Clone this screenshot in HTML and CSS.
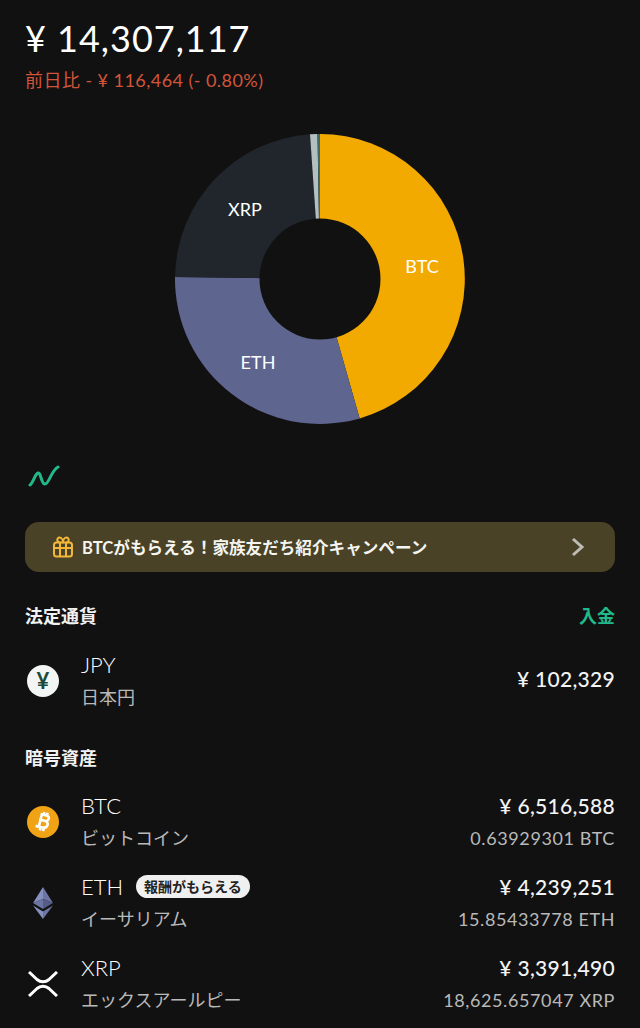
FILE: index.html
```html
<!DOCTYPE html>
<html lang="ja">
<head>
  <meta charset="UTF-8" />
  <meta name="viewport" content="width=device-width, initial-scale=1.0" />
  <title>資産</title>
  <link rel="stylesheet" href="styles.css">
</head>
<body>
  <div class="container">
    <div class="total">¥ 14,307,117</div>
    <div class="change">前日比 - ¥ 116,464 (- 0.80%)</div>

    <div class="chart">
      <svg width="290" height="290" viewBox="0 0 290 290">
        <path d="M145 145 L145 0 A145 145 0 0 1 184.7 284.4 Z" fill="#f3aa00" />
        <path d="M145 145 L184.7 284.4 A145 145 0 0 1 0 143 Z" fill="#5e6690" />
        <path d="M145 145 L0 143 A145 145 0 0 1 135 0.3 Z" fill="#21262d" />
        <path d="M145 145 L135 0.3 A145 145 0 0 1 142.5 0 Z" fill="#b4c0c0" />
        <path d="M145 145 L142.5 0 A145 145 0 0 1 145 0 Z" fill="#3f6a6c" />
        <circle cx="145" cy="145" r="60.5" fill="#111111" />
        <text x="247" y="139" class="chart-label">BTC</text>
        <text x="83" y="235" class="chart-label">ETH</text>
        <text x="70" y="82" class="chart-label">XRP</text>
      </svg>
    </div>

    <svg class="trend" width="32" height="24" viewBox="0 0 32 24">
      <path d="M2 21 C5 19 7 10 10 9 C13 8 13 20 17 20 C21 20 23 7 30 3" fill="none" stroke="#21b98a" stroke-width="3" stroke-linecap="round" />
    </svg>

    <a class="banner">
      <svg class="gift" width="22" height="22" viewBox="0 0 22 22" fill="none" stroke="#f3b73a" stroke-width="2" stroke-linejoin="round">
        <rect x="2" y="6.5" width="18" height="14" rx="2.5" />
        <path d="M2 12 H20 M8 6.5 V20.5 M14 6.5 V20.5" />
        <path d="M8 6.5 C4.5 6.5 4.5 1.5 7.5 1.5 C9.5 1.5 11 4 11 6.5 C11 4 12.5 1.5 14.5 1.5 C17.5 1.5 17.5 6.5 14 6.5" />
      </svg>
      <span class="banner-text">BTCがもらえる！家族友だち紹介キャンペーン</span>
      <svg class="chevron" width="14" height="20" viewBox="0 0 14 20" fill="none" stroke="#bdbdb5" stroke-width="3">
        <path d="M2 2 L11 10 L2 18" />
      </svg>
    </a>

    <div class="section-head first">
      <span class="section-title">法定通貨</span>
      <span class="deposit">入金</span>
    </div>

    <div class="row row-fiat">
      <div class="coin coin-jpy">¥</div>
      <div class="names">
        <div class="symbol">JPY</div>
        <div class="name">日本円</div>
      </div>
      <div class="values">
        <div class="amount">¥ 102,329</div>
      </div>
    </div>

    <div class="section-head second">
      <span class="section-title">暗号資産</span>
    </div>

    <div class="row row-crypto">
      <div class="coin coin-btc">
        <svg class="btc-mark" width="17" height="21" viewBox="0 0 18 22" fill="none" stroke="#fff" stroke-width="2.8">
          <path d="M4 4 H10.5 C15 4 14.5 10 10 10 H4 M10 10 C16 10 15 17.5 9 17.5 H2 M5.5 4 V17.5 M7.5 1 V4 M11 1 V4 M7.5 17.5 V21 M11 17.5 V21" />
        </svg>
      </div>
      <div class="names">
        <div class="symbol">BTC</div>
        <div class="name">ビットコイン</div>
      </div>
      <div class="values">
        <div class="amount">¥ 6,516,588</div>
        <div class="qty">0.63929301 BTC</div>
      </div>
    </div>

    <div class="row">
      <div class="coin">
        <svg width="20" height="32" viewBox="0 0 20 32">
          <path d="M10 0 L0 16 L10 12 Z" fill="#8690bd" />
          <path d="M10 0 L20 16 L10 12 Z" fill="#6b74a3" />
          <path d="M0 16 L10 12 L10 22 Z" fill="#6b74a3" />
          <path d="M20 16 L10 12 L10 22 Z" fill="#545c88" />
          <path d="M0 18.5 L10 24.5 L10 32 Z" fill="#8690bd" />
          <path d="M20 18.5 L10 24.5 L10 32 Z" fill="#6b74a3" />
        </svg>
      </div>
      <div class="names">
        <div class="symbol">ETH <span class="pill">報酬がもらえる</span></div>
        <div class="name">イーサリアム</div>
      </div>
      <div class="values">
        <div class="amount">¥ 4,239,251</div>
        <div class="qty">15.85433778 ETH</div>
      </div>
    </div>

    <div class="row">
      <div class="coin">
        <svg width="30" height="26" viewBox="0 0 30 26" fill="none" stroke="#fff" stroke-width="3">
          <path d="M1 1 L9 8.5 C12.5 11.5 17.5 11.5 21 8.5 L29 1" />
          <path d="M1 25 L9 17.5 C12.5 14.5 17.5 14.5 21 17.5 L29 25" />
        </svg>
      </div>
      <div class="names">
        <div class="symbol">XRP</div>
        <div class="name">エックスアールピー</div>
      </div>
      <div class="values">
        <div class="amount">¥ 3,391,490</div>
        <div class="qty">18,625.657047 XRP</div>
      </div>
    </div>
  </div>
</body>
</html>
```

FILE: styles.css
```css
html, body {
  height: 100%;
}

body {
  margin: 0;
  font-family: 'Lato', 'Noto Sans CJK JP', sans-serif;
  background-color: #111111;
  color: white;
  overflow: hidden;
}

.container {
  padding: 13px 25px 0;
}

.total {
  font-size: 36px;
  line-height: 50px;
  letter-spacing: 1px;
}

.change {
  font-size: 18px;
  line-height: 26px;
  margin-top: 4px;
  letter-spacing: 0.45px;
  color: #d2553a;
}

.chart {
  display: flex;
  justify-content: center;
  margin-top: 41px;
}

.chart svg {
  display: block;
}

.chart-label {
  font-size: 18px;
  fill: white;
  text-anchor: middle;
}

.trend {
  display: block;
  margin-top: 40px;
  margin-left: 3px;
}

.banner {
  display: flex;
  align-items: center;
  height: 50px;
  margin-top: 34px;
  padding: 0 30px 0 27px;
  border-radius: 14px;
  background-color: #4a4226;
}

.gift {
  flex: none;
}

.banner-text {
  flex: 1;
  margin-left: 8px;
  font-size: 16.6px;
  font-weight: 700;
  color: #f4f4f0;
}

.section-head {
  display: flex;
  justify-content: space-between;
  align-items: center;
  height: 30px;
}

.section-head.first {
  margin-top: 28px;
}

.section-head.second {
  margin-top: 21px;
}

.section-title {
  font-size: 18px;
  font-weight: 700;
  color: #f2f2f2;
}

.deposit {
  font-size: 18px;
  font-weight: 700;
  color: #21b98a;
}

.row {
  display: flex;
  align-items: center;
  height: 81px;
}

.row-fiat {
  margin-top: 10px;
}

.row-fiat .amount {
  margin-bottom: 3px;
}

.row-crypto {
  margin-top: 9px;
}

.coin {
  flex: none;
  display: flex;
  align-items: center;
  justify-content: center;
  width: 36px;
  height: 36px;
  border-radius: 50%;
}

.coin-jpy {
  width: 32px;
  height: 32px;
  margin: 0 2px;
  background-color: #f2f5f3;
  color: #1a4a3c;
  font-size: 22px;
  font-weight: 700;
}

.coin-btc {
  width: 32px;
  height: 32px;
  margin: 0 2px;
  background-color: #f0a415;
}

.btc-mark {
  transform: rotate(14deg);
}

.names {
  flex: 1;
  margin-left: 20px;
}

.symbol {
  display: flex;
  align-items: center;
  font-size: 22px;
  font-weight: 300;
  line-height: 32px;
  color: #ffffff;
}

.name {
  font-size: 18px;
  line-height: 32px;
  color: #b9b9b9;
}

.pill {
  margin-left: 13px;
  padding: 0 8px;
  height: 23px;
  line-height: 23px;
  border-radius: 12px;
  background-color: #f0f0f0;
  color: #222;
  font-size: 14px;
  font-weight: 700;
}

.values {
  text-align: right;
}

.amount {
  font-size: 21px;
  line-height: 32px;
  font-weight: 500;
  letter-spacing: 0.3px;
  color: #f4f4f4;
}

.qty {
  font-size: 18px;
  line-height: 32px;
  letter-spacing: 0.6px;
  color: #b9b9b9;
}
```
